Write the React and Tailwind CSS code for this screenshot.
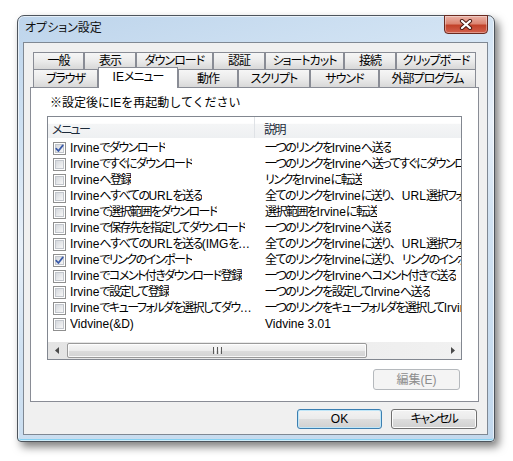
import React from "react";

const row1Tabs = [
  { label: "一般", w: "w-[51px]" },
  { label: "表示", w: "w-[52px]" },
  { label: "ダウンロード", w: "w-[77px]" },
  { label: "認証", w: "w-[52px]" },
  { label: "ショートカット", w: "w-[79px]" },
  { label: "接続", w: "w-[52px]" },
  { label: "クリップボード", w: "w-[80px]" },
];

const row2Tabs = [
  { label: "ブラウザ", w: "w-[65px]" },
  { label: "IEメニュー", w: "w-[80px]", selected: true },
  { label: "動作", w: "w-[60px]" },
  { label: "スクリプト", w: "w-[72px]" },
  { label: "サウンド", w: "w-[69px]" },
  { label: "外部プログラム", w: "w-[97px]" },
];

const rows = [
  [true, "Irvineでダウンロード", "一つのリンクをIrvineへ送る"],
  [false, "Irvineですぐにダウンロード", "一つのリンクをIrvineへ送ってすぐにダウンロード"],
  [false, "Irvineへ登録", "リンクをIrvineに転送"],
  [false, "IrvineへすべてのURLを送る", "全てのリンクをIrvineに送り、URL選択フォームを表示"],
  [false, "Irvineで選択範囲をダウンロード", "選択範囲をIrvineに転送"],
  [false, "Irvineで保存先を指定してダウンロード", "一つのリンクをIrvineへ送る"],
  [false, "IrvineへすべてのURLを送る(IMGを含む)", "全てのリンクをIrvineに送り、URL選択フォームを表示"],
  [true, "Irvineでリンクのインポート", "全てのリンクをIrvineに送り、リンクのインポート"],
  [false, "Irvineでコメント付きダウンロード登録", "一つのリンクをIrvineへコメント付きで送る"],
  [false, "Irvineで設定して登録", "一つのリンクを設定してIrvineへ送る"],
  [false, "Irvineでキューフォルダを選択してダウンロード", "一つのリンクをキューフォルダを選択してIrvineへ送る"],
  [false, "Vidvine(&D)", "Vidvine 3.01"],
];

// latin runs and the comma keep normal spacing, kana/kanji are drawn tighter
const latin = /^[A-Za-z0-9().&: ]+$/;
const Mixed = ({ text }) =>
  text
    .split(/([A-Za-z0-9().&: ]+|、)/)
    .filter(Boolean)
    .map((part, i) =>
      part === "、" ? (
        <span key={i} className="tracking-normal [font-feature-settings:normal]">
          {part}
        </span>
      ) : latin.test(part) ? (
        <span key={i} className="tracking-normal">
          {part}
        </span>
      ) : (
        <span key={i}>{part}</span>
      )
    );

const Tab = ({ label, w, h, selected }) =>
  selected ? (
    <div className={`${w} relative z-10 -mt-[2px] flex h-[21px] items-center justify-center whitespace-nowrap border border-b-0 border-[#898c95] bg-white pb-[2px] tracking-[-1px]`}>
      <Mixed text={label} />
    </div>
  ) : (
    <div className={`${w} ${h} flex items-center justify-center whitespace-nowrap border border-b-0 border-[#898c95] bg-gradient-to-b from-[#f6f6f6] via-[#ebebeb] to-[#d8d8d8] tracking-[-1px]`}>
      {label}
    </div>
  );

const Checkbox = ({ checked }) => (
  <span className="relative flex h-[13px] w-[13px] shrink-0 border border-[#8f8f8f] bg-white p-[1px]">
    <span className="h-full w-full border border-[#c2c6cc] bg-gradient-to-br from-[#d5d8dd] to-[#f7f7f7]" />
    {checked && (
      <svg className="absolute left-0 top-0" width="11" height="11" viewBox="0 0 11 11">
        <path d="M2.2 5.6 L4.4 8 L8.8 2.4" fill="none" stroke="#3a5aa8" strokeWidth="1.7" strokeLinecap="round" strokeLinejoin="round" />
      </svg>
    )}
  </span>
);

const Arrow = ({ dir }) => (
  <svg width="4" height="7" viewBox="0 0 4 7">
    {dir === "left" ? <path d="M4 0 L0 3.5 L4 7 Z" fill="#4a4a4a" /> : <path d="M0 0 L4 3.5 L0 7 Z" fill="#4a4a4a" />}
  </svg>
);

const Button = ({ children, className = "", focused }) => (
  <div
    className={`flex items-center justify-center rounded-[3px] border ${
      focused ? "border-[#3c7fb1] shadow-[inset_0_0_0_1px_#bfe6f8]" : "border-[#707070] shadow-[inset_0_0_0_1px_#fcfcfc]"
    } bg-[linear-gradient(#f3f3f3_0%,#ebebeb_48%,#dddddd_52%,#d0d0d0_100%)] ${className}`}
  >
    {children}
  </div>
);

export default function App() {
  return (
    <div className="min-h-screen bg-white pl-[17px] pt-[15px] font-[family-name:Liberation_Sans,Noto_Sans_CJK_JP,sans-serif] text-[12px] leading-[16px] text-black [font-feature-settings:'palt']">
      <div className="flex h-[427px] w-[478px] flex-col rounded-t-[7px] rounded-b-[4px] border border-[#4d545c] bg-[linear-gradient(165deg,#bdd4eb_0%,#d3e4f4_25%,#e8f0f9_42%,#d1e2f2_60%,#c2d8ed_100%)] shadow-[inset_0_0_0_1px_rgba(255,255,255,0.6),inset_0_-2px_0_#86d0f0,4px_5px_9px_rgba(0,0,0,0.5)]">
        {/* title bar */}
        <div className="flex h-[26px] items-start justify-between">
          <span className="pl-[7px] pt-[4px] text-[#111]">オプション設定</span>
          <div className="-mt-[1px] mr-[6px] flex h-[19px] w-[44px] items-center justify-center rounded-b-[4px] border border-[#6a2a20] bg-[linear-gradient(#eab1a5_0%,#dc8572_45%,#c2422a_55%,#d2604d_100%)] shadow-[inset_0_0_0_1px_rgba(255,255,255,0.35)]">
            <svg width="14" height="11" viewBox="0 0 14 11">
              <path d="M3 2 L11 9 M11 2 L3 9" stroke="#4a1a12" strokeWidth="4.2" strokeLinecap="round" />
              <path d="M3 2 L11 9 M11 2 L3 9" stroke="#ffffff" strokeWidth="2.3" strokeLinecap="round" />
            </svg>
          </div>
        </div>

        {/* client */}
        <div className="mb-[6px] ml-[5px] mr-[6px] flex flex-1 flex-col border border-[#7f8893] bg-[#f0f0f0]">
          <div className="pt-[9px]">
            <div className="ml-[9px] flex h-[17px]">
              {row1Tabs.map((t) => (
                <Tab key={t.label} label={t.label} w={t.w} h="h-[17px]" />
              ))}
            </div>
            <div className="ml-[9px] flex h-[18px]">
              {row2Tabs.map((t) => (
                <Tab key={t.label} label={t.label} w={t.w} h="h-[18px]" selected={t.selected} />
              ))}
            </div>

            {/* tab panel */}
            <div className="ml-[6px] flex h-[315px] w-[449px] flex-col border border-[#898c95] bg-white">
              <p className="pl-[19px] pt-[7px] [font-feature-settings:normal]">※設定後にIEを再起動してください</p>

              <div className="ml-[16px] mt-[5px] flex h-[244px] w-[415px] flex-col border border-[#828790] bg-white tracking-[-1.5px]">
                <div className="flex h-[21px] bg-[linear-gradient(#ffffff_0%,#ffffff_30%,#f4f5f6_35%,#eef0f2_100%)] text-[#1c2a3a]">
                  <div className="w-[207px] border-r border-[#dfe2e6] pl-[4px] pt-[5px]">メニュー</div>
                  <div className="pl-[9px] pt-[5px]">説明</div>
                </div>
                <div className="flex-1 overflow-hidden pt-[2px]">
                  {rows.map(([checked, name, desc]) => (
                    <div key={name} className="flex h-[16px] items-center whitespace-nowrap">
                      <div className="flex w-[207px] shrink-0 items-center pl-[5px] pr-[3px]">
                        <Checkbox checked={checked} />
                        <span className="ml-[4px] truncate">
                          <Mixed text={name} />
                        </span>
                      </div>
                      <span className="overflow-hidden pl-[10px]">
                        <Mixed text={desc} />
                      </span>
                    </div>
                  ))}
                </div>
                {/* horizontal scrollbar */}
                <div className="flex h-[17px] bg-[linear-gradient(90deg,#e4e4e4,#f1f1f1)]">
                  <div className="flex w-[17px] items-center justify-center">
                    <Arrow dir="left" />
                  </div>
                  <div className="flex flex-1 items-center">
                    <div className="ml-[2px] flex h-[15px] w-[300px] items-center justify-center rounded-[2px] border border-[#9a9a9a] bg-[linear-gradient(#f7f7f7_0%,#ececec_50%,#dcdcdc_51%,#d3d3d3_100%)] shadow-[inset_0_0_0_1px_rgba(255,255,255,0.8)]">
                      <div className="flex gap-[1px]">
                        <span className="h-[7px] w-[1px] bg-[#5a5a5a]" />
                        <span className="h-[7px] w-[1px] bg-[#f8f8f8]" />
                        <span className="h-[7px] w-[1px] bg-[#5a5a5a]" />
                        <span className="h-[7px] w-[1px] bg-[#f8f8f8]" />
                        <span className="h-[7px] w-[1px] bg-[#5a5a5a]" />
                      </div>
                    </div>
                  </div>
                  <div className="flex w-[17px] items-center justify-center">
                    <Arrow dir="right" />
                  </div>
                </div>
              </div>

              <div className="mr-[18px] mt-[9px] flex h-[21px] w-[87px] items-center justify-center self-end rounded-[3px] border border-[#b5b9bd] bg-[#f4f4f4] text-[#8d8d8d]">
                編集(E)
              </div>
            </div>
          </div>

          <div className="mt-[7px] flex justify-end gap-[9px] pr-[10px]">
            <Button focused className="h-[20px] w-[85px]">
              OK
            </Button>
            <Button className="h-[20px] w-[86px] tracking-[-1.5px]">キャンセル</Button>
          </div>
        </div>
      </div>
    </div>
  );
}
